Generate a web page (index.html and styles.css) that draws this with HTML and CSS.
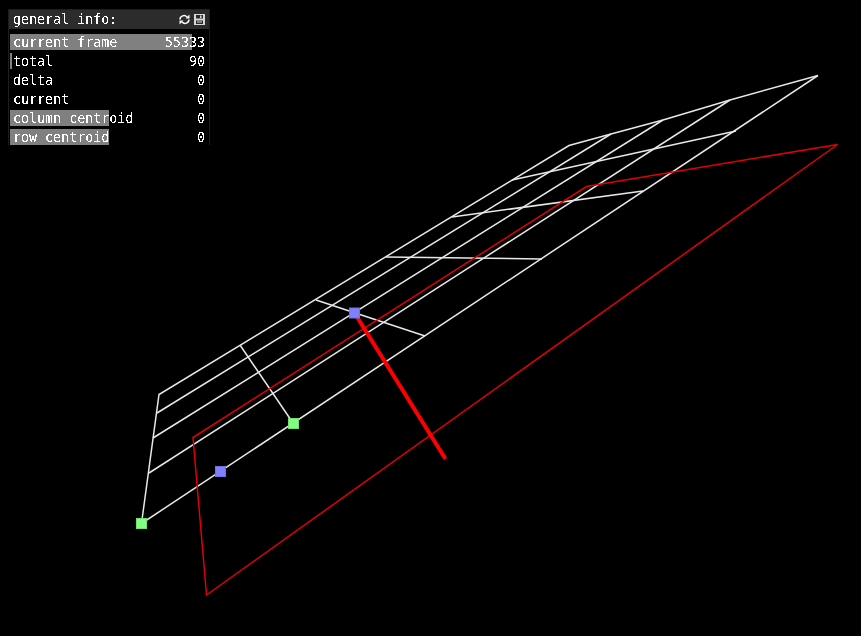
FILE: index.html
```html
<!DOCTYPE html>
<html lang="en">
<head>
<meta charset="utf-8">
<title>general info</title>
<link rel="stylesheet" href="styles.css">
</head>
<body>
<svg class="scene" width="861" height="636" viewBox="0 0 861 636" xmlns="http://www.w3.org/2000/svg">
  <defs>
    <filter id="crisp" x="0" y="0" width="100%" height="100%" color-interpolation-filters="sRGB">
      <feComponentTransfer><feFuncA type="discrete" tableValues="0 0 1 1"/></feComponentTransfer>
    </filter>
  </defs>
  <g class="mesh">
    <polyline points="818,75.500 730,100 663,120 611,134 569,145.500 159,394.500 141.500,523.500"/>
    <line x1="818" y1="75.500" x2="141.500" y2="523.500"/>
    <line x1="730" y1="100" x2="149" y2="473"/>
    <line x1="663" y1="120" x2="153" y2="438"/>
    <line x1="611" y1="134" x2="157" y2="413"/>
    <line x1="512" y1="180" x2="736" y2="131"/>
    <line x1="452" y1="217" x2="643" y2="191"/>
    <line x1="386" y1="257" x2="542" y2="259"/>
    <line x1="316" y1="300" x2="425" y2="336"/>
    <line x1="240" y1="345" x2="293" y2="423"/>
  </g>
  <polygon class="plane" points="193,437.500 206.500,595 837.500,144.500 586.500,186.500"/>
  <line class="normal" x1="354.500" y1="313" x2="445.500" y2="459"/>
  <rect class="handle-green" x="136.500" y="518.500" width="10" height="10"/>
  <rect class="handle-green" x="288.500" y="418.500" width="10" height="10"/>
  <rect class="handle-blue" x="215.500" y="466.500" width="10" height="10"/>
  <rect class="handle-blue" x="349.500" y="308" width="10" height="10"/>
</svg>
<section class="panel">
  <header class="panel-head">
    <span class="txt">general info:</span>
    <span class="panel-icons">
      <svg width="11" height="11" viewBox="0 0 11 11" xmlns="http://www.w3.org/2000/svg"><path class="ico-line" d="M1 5.500a4 4 0 0 1 7-2.500M10 5.500a4 4 0 0 1-7 2.500"/><path class="ico-fill" d="M6.500 4.500h4v-4zM4.500 6.500h-4v4z"/></svg>
      <svg width="11" height="11" viewBox="0 0 11 11" xmlns="http://www.w3.org/2000/svg"><path class="ico-soft" fill-rule="evenodd" d="M0 0h11v11H0zM2 1v3.500h7V1zM2 6.500V10h7V6.500z"/><path class="ico-soft" d="M6 1.500h1.500v2.500H6zM3 7.500h5v1H3z"/></svg>
    </span>
  </header>
  <div class="rows">
    <div class="row"><i class="bar" style="width:182px"></i><span class="txt">current frame</span><span class="txt">55333</span></div>
    <div class="row"><i class="bar" style="width:2px"></i><span class="txt">total</span><span class="txt">90</span></div>
    <div class="row"><span class="txt">delta</span><span class="txt">0</span></div>
    <div class="row"><span class="txt">current</span><span class="txt">0</span></div>
    <div class="row"><i class="bar" style="width:99px"></i><span class="txt">column centroid</span><span class="txt">0</span></div>
    <div class="row"><i class="bar" style="width:99px"></i><span class="txt">row centroid</span><span class="txt">0</span></div>
  </div>
</section>
</body>
</html>
```
FILE: styles.css
```css
html, body { margin: 0; padding: 0; background: #000; width: 861px; height: 636px; overflow: hidden; }
.scene { display: block; }
.mesh line, .mesh polyline { fill: none; stroke: #e8e8e8; stroke-width: 1.5; }
.plane { fill: none; stroke: #e00000; stroke-width: 1.5; }
.normal { stroke: #ff0000; stroke-width: 4; }
.handle-green { fill: #80ff80; stroke: #70e070; stroke-width: 1; }
.handle-blue { fill: #8080ff; stroke: #7070e0; stroke-width: 1; }
.panel { position: absolute; left: 8px; top: 9px; width: 200px; height: 135px; font: 13.33px/19px "DejaVu Sans Mono", monospace; color: #fff; border: 1px solid #1e1e1e; border-bottom: 0; }
.txt { position: relative; filter: url(#crisp); white-space: pre; }
.panel-head { display: flex; justify-content: space-between; align-items: center; height: 19px; padding: 0 4px 0 4px; background: #2c2c2c; }
.panel-icons { display: flex; gap: 4px; align-items: center; }
.ico-line { fill: none; stroke: #fff; stroke-width: 1.5; }
.ico-fill { fill: #fff; }
.ico-soft { fill: #d8d8d8; }
.rows { margin-top: 5px; display: flex; flex-direction: column; gap: 3px; padding-left: 1px; }
.row { position: relative; display: flex; justify-content: space-between; height: 16px; line-height: 17px; padding: 0 4px 0 3px; }
.bar { position: absolute; left: 0; top: 0; bottom: 0; background: #808080; }
```
